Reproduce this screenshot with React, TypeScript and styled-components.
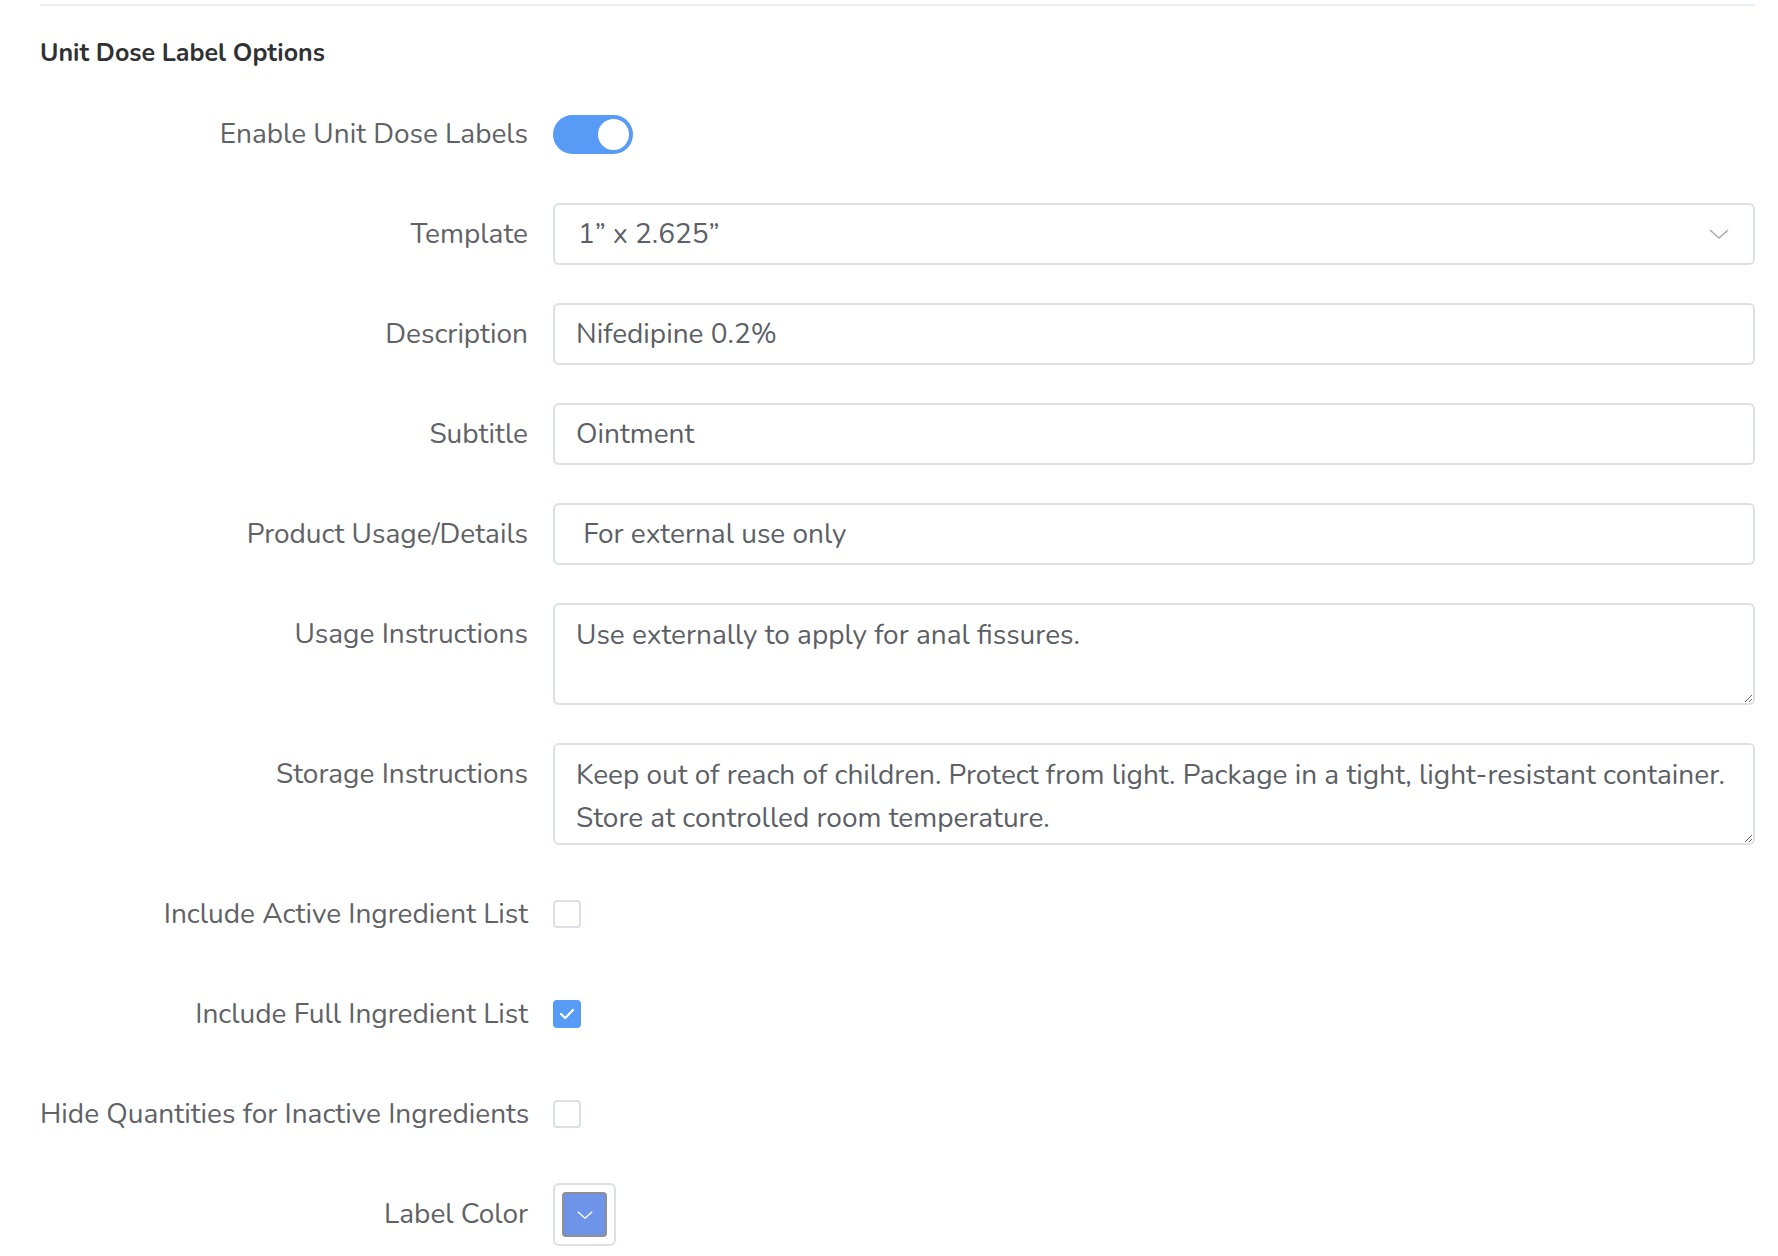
import * as React from "react";
import styled, { createGlobalStyle } from "styled-components";

const GlobalStyle = createGlobalStyle`
  html, body {
    margin: 0;
    padding: 0;
    background: #ffffff;
  }
  body {
    font-family: Nunito, Lato, "Open Sans", sans-serif;
    color: #606266;
  }
`;

const Page = styled.div`
  padding: 0 23px 40px 40px;
  background: #ffffff;
`;

const Divider = styled.div`
  height: 2px;
  margin-top: 4px;
  background-color: #ebeef5;
`;

const Title = styled.h3`
  margin: 29px 0 32px;
  font-size: 25px;
  line-height: 36px;
  font-weight: 700;
  color: #303133;
`;

const Form = styled.div`
  display: flex;
  flex-direction: column;
  gap: 38px;
`;

const Row = styled.div`
  display: grid;
  grid-template-columns: 488px 1fr;
  column-gap: 25px;
  align-items: start;
`;

const Label = styled.label`
  text-align: right;
  font-size: 28px;
  line-height: 62px;
  color: #606266;
  white-space: nowrap;
`;

const Control = styled.div`
  min-height: 62px;
  display: flex;
  align-items: center;
`;

const fieldBase = `
  box-sizing: border-box;
  width: 100%;
  border: 2px solid #dcdfe6;
  border-radius: 6px;
  background: #ffffff;
  font-family: Nunito, Lato, "Open Sans", sans-serif;
  font-size: 28px;
  color: #5c5f66;
  outline: none;
`;

const TextInput = styled.input`
  ${fieldBase}
  height: 62px;
  padding: 0 21px;
`;

const TextArea = styled.textarea`
  ${fieldBase}
  height: 102px;
  padding: 9px 21px;
  line-height: 43px;
  resize: vertical;
`;

const SelectBox = styled.div`
  ${fieldBase}
  height: 62px;
  padding: 0 24px 0 23px;
  display: flex;
  align-items: center;
  justify-content: space-between;
`;

const Toggle = styled.span<{ $on?: boolean }>`
  position: relative;
  display: inline-block;
  width: 80px;
  height: 39px;
  border-radius: 20px;
  background-color: ${(p) => (p.$on ? "#589bf7" : "#dcdfe6")};
  &::after {
    content: "";
    position: absolute;
    top: 4px;
    left: ${(p) => (p.$on ? "45px" : "4px")};
    width: 31px;
    height: 31px;
    border-radius: 50%;
    background: #ffffff;
  }
`;

const Check = styled.span<{ $checked?: boolean }>`
  box-sizing: border-box;
  width: 28px;
  height: 28px;
  border-radius: 4px;
  border: 2px solid ${(p) => (p.$checked ? "#589bf7" : "#dcdfe6")};
  background-color: ${(p) => (p.$checked ? "#589bf7" : "#ffffff")};
  display: flex;
  align-items: center;
  justify-content: center;
`;

const SwatchFrame = styled.div`
  box-sizing: border-box;
  width: 63px;
  height: 63px;
  border: 2px solid #dcdfe6;
  border-radius: 6px;
  padding: 7px;
`;

const Swatch = styled.div<{ $color: string }>`
  box-sizing: border-box;
  width: 100%;
  height: 100%;
  border: 2px solid #8f8f93;
  border-radius: 4px;
  background-color: ${(p) => p.$color};
  display: flex;
  align-items: center;
  justify-content: center;
`;

const Chevron = ({ color, size }: { color: string; size: number }) => (
  <svg width={size} height={size / 2} viewBox="0 0 20 10" fill="none">
    <path d="M1 1 L10 9 L19 1" stroke={color} strokeWidth="1.6" strokeLinejoin="round" />
  </svg>
);

const CheckMark = () => (
  <svg width="16" height="12" viewBox="0 0 16 12" fill="none">
    <path d="M2 6 L6.2 10 L14 2" stroke="#ffffff" strokeWidth="2.2" strokeLinecap="round" strokeLinejoin="round" />
  </svg>
);

const App = () => (
  <Page>
    <GlobalStyle />
    <Divider />
    <Title>Unit Dose Label Options</Title>
    <Form>
      <Row>
        <Label>Enable Unit Dose Labels</Label>
        <Control>
          <Toggle $on />
        </Control>
      </Row>
      <Row>
        <Label>Template</Label>
        <SelectBox>
          <span>1” x 2.625”</span>
          <Chevron color="#a8abb2" size={20} />
        </SelectBox>
      </Row>
      <Row>
        <Label>Description</Label>
        <TextInput defaultValue="Nifedipine 0.2%" />
      </Row>
      <Row>
        <Label>Subtitle</Label>
        <TextInput defaultValue="Ointment" />
      </Row>
      <Row>
        <Label>Product Usage/Details</Label>
        <TextInput defaultValue=" For external use only" />
      </Row>
      <Row>
        <Label>Usage Instructions</Label>
        <TextArea defaultValue="Use externally to apply for anal fissures." />
      </Row>
      <Row>
        <Label>Storage Instructions</Label>
        <TextArea defaultValue="Keep out of reach of children. Protect from light. Package in a tight, light-resistant container. Store at controlled room temperature." />
      </Row>
      <Row>
        <Label>Include Active Ingredient List</Label>
        <Control>
          <Check />
        </Control>
      </Row>
      <Row>
        <Label>Include Full Ingredient List</Label>
        <Control>
          <Check $checked>
            <CheckMark />
          </Check>
        </Control>
      </Row>
      <Row>
        <Label>Hide Quantities for Inactive Ingredients</Label>
        <Control>
          <Check />
        </Control>
      </Row>
      <Row>
        <Label>Label Color</Label>
        <Control>
          <SwatchFrame>
            <Swatch $color="#6e94ea">
              <Chevron color="#ffffff" size={16} />
            </Swatch>
          </SwatchFrame>
        </Control>
      </Row>
    </Form>
  </Page>
);

export default App;
